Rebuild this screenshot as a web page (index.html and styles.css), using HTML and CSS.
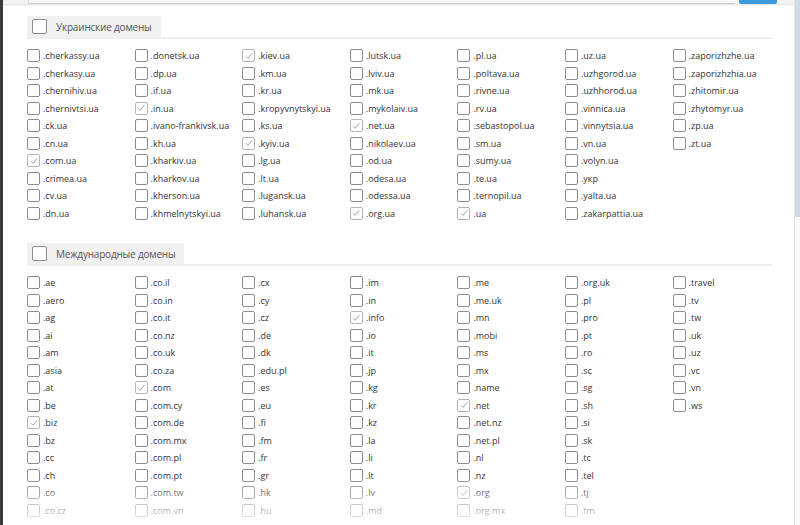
FILE: index.html
```html
<!DOCTYPE html>
<html lang="ru">
<head>
  <meta charset="UTF-8">
  <title>Выбор доменов</title>
  <link rel="stylesheet" href="styles.css">
</head>
<body>

  <div class="frame">
    <div class="edge"></div>

    <div class="modal">
      <div class="topbar">
        <div class="search"></div>
        <div class="search-btn"></div>
      </div>

      <div class="content">
        <div class="section">
          <div class="section-head">
            <label class="section-title"><span class="box"></span>Украинские домены</label>
          </div>
          <div class="domains" id="ua"></div>
        </div>

        <div class="section">
          <div class="section-head">
            <label class="section-title"><span class="box"></span>Международные домены</label>
          </div>
          <div class="domains" id="intl"></div>
        </div>
      </div>

      <div class="fade"></div>
    </div>

    <div class="scrollbar"><div class="thumb"></div></div>
  </div>

  <script>
    // колонки идут сверху вниз, как в списке
    const UA = [
      [".cherkassy.ua", ".cherkasy.ua", ".chernihiv.ua", ".chernivtsi.ua", ".ck.ua", ".cn.ua", "*.com.ua", ".crimea.ua", ".cv.ua", ".dn.ua"],
      [".donetsk.ua", ".dp.ua", ".if.ua", "*.in.ua", ".ivano-frankivsk.ua", ".kh.ua", ".kharkiv.ua", ".kharkov.ua", ".kherson.ua", ".khmelnytskyi.ua"],
      ["*.kiev.ua", ".km.ua", ".kr.ua", ".kropyvnytskyi.ua", ".ks.ua", "*.kyiv.ua", ".lg.ua", ".lt.ua", ".lugansk.ua", ".luhansk.ua"],
      [".lutsk.ua", ".lviv.ua", ".mk.ua", ".mykolaiv.ua", "*.net.ua", ".nikolaev.ua", ".od.ua", ".odesa.ua", ".odessa.ua", "*.org.ua"],
      [".pl.ua", ".poltava.ua", ".rivne.ua", ".rv.ua", ".sebastopol.ua", ".sm.ua", ".sumy.ua", ".te.ua", ".ternopil.ua", "*.ua"],
      [".uz.ua", ".uzhgorod.ua", ".uzhhorod.ua", ".vinnica.ua", ".vinnytsia.ua", ".vn.ua", ".volyn.ua", ".укр", ".yalta.ua", ".zakarpattia.ua"],
      [".zaporizhzhe.ua", ".zaporizhzhia.ua", ".zhitomir.ua", ".zhytomyr.ua", ".zp.ua", ".zt.ua"]
    ];

    const INTL = [
      [".ae", ".aero", ".ag", ".ai", ".am", ".asia", ".at", ".be", "*.biz", ".bz", ".cc", ".ch", ".co", ".co.cz"],
      [".co.il", ".co.in", ".co.it", ".co.nz", ".co.uk", ".co.za", "*.com", ".com.cy", ".com.de", ".com.mx", ".com.pl", ".com.pt", ".com.tw", ".com.vn"],
      [".cx", ".cy", ".cz", ".de", ".dk", ".edu.pl", ".es", ".eu", ".fi", ".fm", ".fr", ".gr", ".hk", ".hu"],
      [".im", ".in", "*.info", ".io", ".it", ".jp", ".kg", ".kr", ".kz", ".la", ".li", ".lt", ".lv", ".md"],
      [".me", ".me.uk", ".mn", ".mobi", ".ms", ".mx", ".name", "*.net", ".net.nz", ".net.pl", ".nl", ".nz", "*.org", ".org.mx"],
      [".org.uk", ".pl", ".pro", ".pt", ".ro", ".sc", ".sg", ".sh", ".si", ".sk", ".tc", ".tel", ".tj", ".tm"],
      [".travel", ".tv", ".tw", ".uk", ".uz", ".vc", ".vn", ".ws"]
    ];

    const CHECK = '<svg viewBox="0 0 12 12" width="10" height="10"><path d="M2.2 6.2 L4.8 8.8 L9.8 2.8" fill="none" stroke="#999" stroke-width="1.1"/></svg>';

    function render(id, cols) {
      const root = document.getElementById(id);
      let html = "";
      cols.forEach(col => {
        html += '<div class="col">';
        col.forEach(name => {
          const on = name.startsWith("*");
          const label = on ? name.slice(1) : name;
          html += `<label class="domain${on ? " checked" : ""}"><span class="box">${on ? CHECK : ""}</span>${label}</label>`;
        });
        html += "</div>";
      });
      root.innerHTML = html;
    }

    render("ua", UA);
    render("intl", INTL);
  </script>

</body>
</html>
```

FILE: styles.css
```css
body {
  margin: 0;
  width: 800px;
  height: 525px;
  overflow: hidden;
  background: #fff;
  font-family: 'Open Sans', sans-serif;
  color: #333;
}
.frame {
  display: flex;
  height: 525px;
}
.edge {
  width: 3px;
  flex-shrink: 0;
  background: #3a3a3a;
}
.modal {
  position: relative;
  flex: 1;
  overflow: hidden;
  background: #fff;
}
.topbar {
  height: 4px;
  display: flex;
  background: #f3f3f3;
  box-shadow: 0 1px 2px rgba(0, 0, 0, 0.12);
  padding-left: 25px;
}
.search {
  width: 706px;
  border-bottom: 1px solid #c8c8c8;
  border-left: 1px solid #d8d8d8;
  background: #f7f7f7;
}
.search-btn {
  width: 38px;
  margin-left: 4px;
  background: #3d9ad8;
  border-radius: 0 0 2px 2px;
}
.content {
  padding: 12px 22px 0 24px;
}
.section {
  margin-bottom: 21px;
}
.section-head {
  border-bottom: 2px solid #efefef;
  display: flex;
}
.section-title {
  display: flex;
  align-items: center;
  gap: 9px;
  height: 21px;
  padding: 0 9px 0 5px;
  background: #f1f1f1;
  font-size: 10px;
  letter-spacing: -0.2px;
  color: #555;
}
.section-title .box {
  width: 13px;
  height: 13px;
  margin-right: 0;
}
.domains {
  display: grid;
  grid-template-columns: repeat(7, 107.6px);
  margin-top: 8px;
}
.col {
  display: flex;
  flex-direction: column;
}
.domain {
  display: flex;
  align-items: center;
  height: 17.5px;
  font-size: 9px;
  white-space: nowrap;
}
.box {
  width: 11px;
  height: 11px;
  border: 1px solid #8c8c8c;
  border-radius: 2px;
  background: #fff;
  margin-right: 3px;
  display: flex;
  align-items: center;
  justify-content: center;
  flex-shrink: 0;
}
.checked .box {
  border-color: #b4b4b4;
}
.fade {
  position: absolute;
  left: 0;
  right: 0;
  bottom: 0;
  height: 48px;
  background: linear-gradient(rgba(255, 255, 255, 0), rgba(255, 255, 255, 0.88));
}
.scrollbar {
  width: 5px;
  flex-shrink: 0;
  background: #fafafa;
  border-left: 1px solid #e4e4e4;
}
.thumb {
  height: 217px;
  background: #cfdbe3;
}
```
